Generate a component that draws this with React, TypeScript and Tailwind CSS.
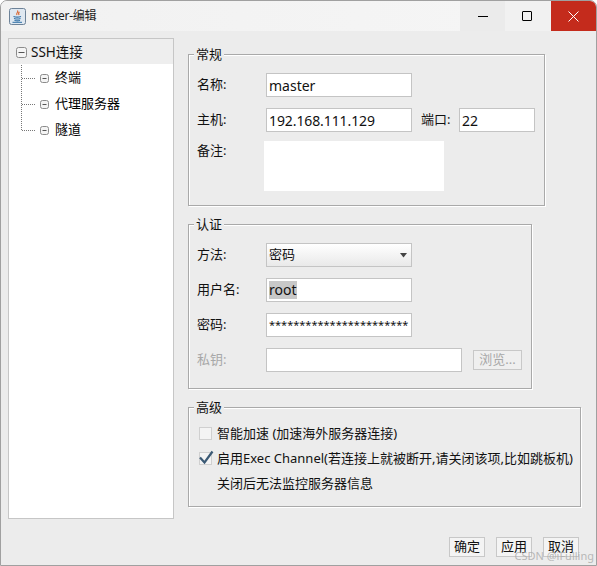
import type { ReactNode } from 'react'

const FONT = 'font-["Noto_Sans","Noto_Sans_CJK_SC",sans-serif]'

function MinusBox({ size = 11 }: { size?: number }) {
  return (
    <svg width={size} height={size} viewBox={`0 0 ${size} ${size}`} className="shrink-0">
      <rect x="0.5" y="0.5" width={size - 1} height={size - 1} rx="2" fill="#f4f4f4" stroke="#8c8c8c" />
      <path d={`M2.5 ${Math.floor(size / 2) + 0.5}h${size - 5}`} stroke="#555" />
    </svg>
  )
}

function JavaIcon() {
  return (
    <svg width="17" height="17" viewBox="0 0 17 17">
      <rect x="0.5" y="0.5" width="16" height="16" rx="2" fill="#dfe8f1" stroke="#6d8298" />
      <path d="M8.5 2.5c1.5 1.5-2 2.6-.5 4.5M10.5 4c-1.6.8-1 1.7-.4 3" fill="none" stroke="#d9622b" strokeWidth="1.1" />
      <path d="M4.5 8.5c2 .7 5.5.7 7.5 0M5 10.5c2 .6 5 .6 6.5 0M5.5 12.5c2 .5 4 .5 5.5 0" fill="none" stroke="#2f6ea5" strokeWidth="1.1" />
      <path d="M3.5 14.3h9.5" stroke="#2f6ea5" />
    </svg>
  )
}

function TreeChild({ label, last }: { label: string; last?: boolean }) {
  return (
    <div className="flex h-[26px] items-center text-[13px] text-black">
      <svg width="31" height="26" className="shrink-0">
        <path d={last ? 'M12.5 0v13.5' : 'M12.5 0v26'} stroke="#777" strokeDasharray="1 1" />
        <path d="M13 13.5h13" stroke="#777" strokeDasharray="1 1" />
      </svg>
      <MinusBox size={9} />
      <span className="ml-[6px]">{label}</span>
    </div>
  )
}

function Group({ title, className, children }: { title: string; className: string; children: ReactNode }) {
  return (
    <div className={`relative border border-[#a9a9a9] shadow-[1px_1px_0_#fff,inset_1px_1px_0_#fff] ${className}`}>
      <span className="absolute top-[-10px] left-[5px] bg-[#ececec] px-[2px] text-[13px] leading-[18px] text-[#111]">{title}</span>
      {children}
    </div>
  )
}

function Field({ value, className = 'w-[146px]', selected, small }: { value?: string; className?: string; selected?: boolean; small?: boolean }) {
  return (
    <div className={`flex h-[24px] items-center border border-[#c4c4c4] bg-white pl-[2px] text-[#111] ${small ? 'text-[11px]' : 'text-[14px]'} ${className}`}>
      <span className={selected ? 'bg-[#c8c8c8] leading-[18px]' : ''}>{value}</span>
    </div>
  )
}

function Label({ text, muted }: { text: string; muted?: boolean }) {
  return <span className={`w-[69px] shrink-0 text-[13px] ${muted ? 'text-[#a8a8a8]' : 'text-[#111]'}`}>{text}</span>
}

function Row({ children, className = 'mb-[11px]' }: { children: ReactNode; className?: string }) {
  return <div className={`flex h-[24px] items-center ${className}`}>{children}</div>
}

function ActionButton({ label }: { label: string }) {
  return (
    <button className="flex h-[20px] w-[36px] items-center justify-center border border-[#c8c8c8] bg-[#f4f4f4] text-[13px] text-[#111]">
      {label}
    </button>
  )
}

export default function App() {
  return (
    <div className={`relative h-[566px] w-[597px] overflow-hidden rounded-t-[7px] border border-[#a0a0a0] bg-[#ececec] ${FONT}`}>
      {/* title bar */}
      <div className="flex h-[30px] items-center bg-gradient-to-r from-[#f1f1f1] to-[#f6f6f6]">
        <div className="ml-[8px]"><JavaIcon /></div>
        <span className="ml-[5px] text-[12px] tracking-[-0.25px] text-[#222]">master-编辑</span>
        <div className="ml-auto flex h-full">
          <div className="flex w-[45px] items-center justify-center bg-[#ebebeb]">
            <div className="h-[1px] w-[10px] bg-black" />
          </div>
          <div className="flex w-[46px] items-center justify-center bg-[#f1f1f1]">
            <div className="mr-[2px] h-[10px] w-[10px] rounded-[1px] border border-black" />
          </div>
          <div className="flex w-[45px] items-center justify-center bg-[#c42b1c]">
            <svg width="11" height="11" viewBox="0 0 11 11"><path d="M.5.5l10 10M10.5.5l-10 10" stroke="#fff" /></svg>
          </div>
        </div>
      </div>

      <div className="flex pt-[7px] pl-[7px]">
        {/* tree */}
        <div className="h-[481px] w-[166px] shrink-0 border border-[#c6c6c6] bg-white">
          <div className="flex h-[25px] items-center bg-[#eeeeee] pt-[1px] pl-[7px] text-[13.5px] text-[#111]">
            <MinusBox size={11} />
            <span className="ml-[4px]">SSH连接</span>
          </div>
          <div className="pt-[1px]">
            <TreeChild label="终端" />
            <TreeChild label="代理服务器" />
            <TreeChild label="隧道" last />
          </div>
        </div>

        {/* settings */}
        <div className="ml-[14px] flex flex-col pt-[16px]">
          <Group title="常规" className="h-[152px] w-[357px] pt-[18px] pl-[8px]">
            <Row><Label text="名称:" /><Field value="master" /></Row>
            <Row className="mb-[9px]">
              <Label text="主机:" />
              <Field value="192.168.111.129" className="w-[146px] tracking-[-0.1px]" />
              <span className="ml-[9px] w-[38px] text-[13px] text-[#111]">端口:</span>
              <Field value="22" className="w-[76px]" />
            </Row>
            <div className="flex">
              <span className="w-[67px] shrink-0 text-[13px] leading-[18px] text-[#111]">备注:</span>
              <div className="h-[50px] w-[180px] bg-white" />
            </div>
          </Group>

          <Group title="认证" className="mt-[18px] h-[165px] w-[344px] pt-[18px] pl-[8px]">
            <Row>
              <Label text="方法:" />
              <div className="flex h-[24px] w-[146px] items-center justify-between border border-[#c4c4c4] bg-gradient-to-b from-white to-[#e9e9e9] pr-[2px] pl-[2px] text-[13px] text-[#111]">
                <span>密码</span>
                <svg width="9" height="5" viewBox="0 0 9 5" className="mr-[1px]"><path d="M1 0h7L4.5 4.5z" fill="#444" /></svg>
              </div>
            </Row>
            <Row><Label text="用户名:" /><Field value="root" selected /></Row>
            <Row>
              <Label text="密码:" />
              <Field value="***********************" small />
            </Row>
            <Row className="">
              <Label text="私钥:" muted />
              <Field className="w-[196px]" />
              <button className="ml-[11px] flex h-[20px] w-[49px] items-center justify-center border border-[#c8c8c8] bg-[#efefef] text-[13px] text-[#a8a8a8]">浏览...</button>
            </Row>
          </Group>

          <Group title="高级" className="mt-[18px] h-[100px] w-[393px] pt-[13px] pl-[10px]">
            <div className="flex h-[25px] items-center text-[13px] text-[#111]">
              <span className="h-[13px] w-[13px] border border-[#d0d0d0] bg-[#f4f4f4]" />
              <span className="ml-[5px]">智能加速 (加速海外服务器连接)</span>
            </div>
            <div className="flex h-[25px] items-center text-[13px] text-[#111]">
              <span className="relative h-[13px] w-[13px] border border-[#d0d0d0] bg-[#f4f4f4]">
                <svg width="15" height="15" viewBox="0 0 15 15" className="absolute -top-[3px] -left-[1px]">
                  <path d="M1 7.5l4.5 5L13.5 1.5" fill="none" stroke="#3b5a75" strokeWidth="2.2" />
                </svg>
              </span>
              <span className="ml-[5px] whitespace-nowrap">启用Exec Channel(若连接上就被断开,请关闭该项,比如跳板机)</span>
            </div>
            <div className="flex h-[25px] items-center pl-[18px] text-[13px] text-[#111]">关闭后无法监控服务器信息</div>
          </Group>
        </div>
      </div>

      {/* footer buttons */}
      <div className="mt-[18px] mr-[17px] flex justify-end gap-[11px]">
        <ActionButton label="确定" />
        <ActionButton label="应用" />
        <ActionButton label="取消" />
      </div>
      <span className="absolute right-[2px] bottom-[1px] text-[11px] text-[#a9a9a9]/80">CSDN @iFulling</span>
    </div>
  )
}
